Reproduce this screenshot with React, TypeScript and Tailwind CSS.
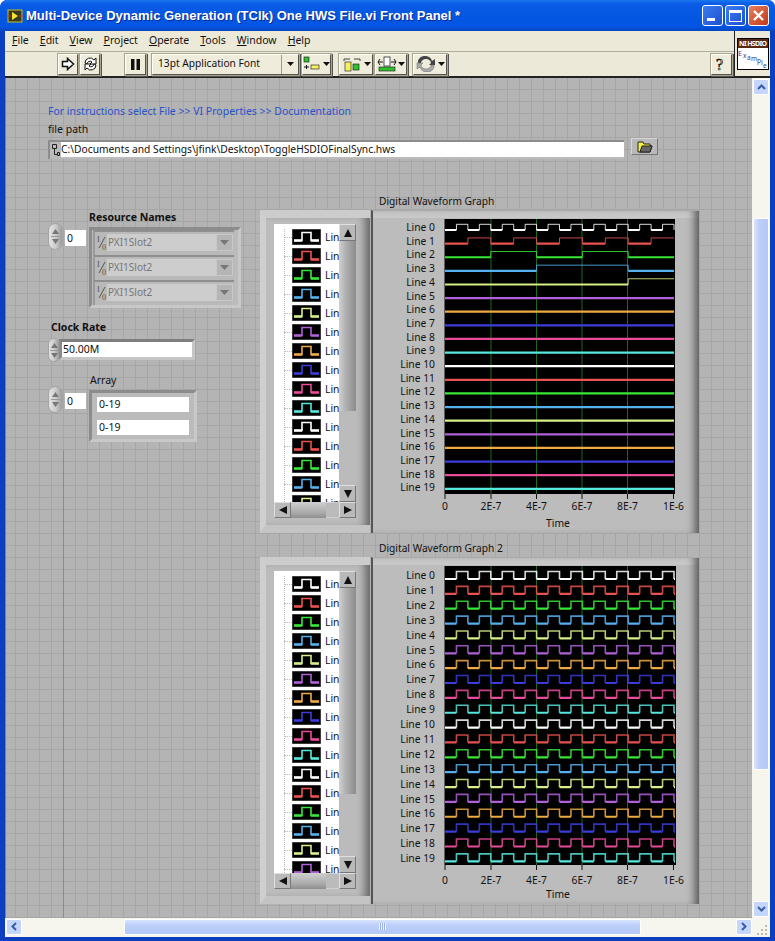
import React from "react";

const COLORS = ["#ffffff", "#e8534f", "#38e838", "#55b0ee", "#d8f088", "#b060d8", "#eeaa44", "#3c3cdc", "#e84c9a", "#55e8dc"];
const SANS = "[font-family:'Noto_Sans','Open_Sans',sans-serif]";

// one square wave, drawn as a thick low part and a thinner high part
function wave(x0: number, x1: number, seg: number, low: number, high: number) {
  let lowD = "";
  let highD = "";
  let x = x0;
  let up = false;
  while (x < x1 - 0.5) {
    const next = Math.min(x + seg, x1);
    if (up) highD += `M${x} ${low}V${high}H${next}${next < x1 ? `V${low}` : ""}`;
    else lowD += `M${x} ${low}H${next}`;
    x = next;
    up = !up;
  }
  return { lowD, highD };
}

function Plot({ top, height, plotH, w, lowStart, step, amp, segs, thin, labelStart, labelStep, tickY, tickLabelY, timeY }: any) {
  const ticks = [
    { x: 72, t: "0" },
    { x: 118, t: "2E-7" },
    { x: 163.5, t: "4E-7" },
    { x: 209, t: "6E-7" },
    { x: 254.5, t: "8E-7" },
    { x: 300.5, t: "1E-6" },
  ];
  return (
    <svg width={326} height={height} className={`block ${SANS}`}>
      <rect x={71.5} y={top} width={w - 71.5} height={plotH} fill="#000" />
      {[118, 163.5, 209, 254.5].map((x) => (
        <line key={x} x1={x} x2={x} y1={top} y2={top + plotH} stroke="#1f6a1f" strokeWidth={1} />
      ))}
      {Array.from({ length: 20 }).map((_, k) => {
        const low = lowStart + step * k;
        const seg = segs(k);
        const { lowD, highD } = wave(72, w - 1, seg, low, low - amp);
        const c = COLORS[k % 10];
        return (
          <g key={k} fill="none" stroke={c}>
            <path d={lowD} strokeWidth={2.2} />
            <path d={highD} strokeWidth={thin} strokeOpacity={0.85} />
          </g>
        );
      })}
      {Array.from({ length: 20 }).map((_, k) => (
        <text key={k} x={62} y={labelStart + labelStep * k} textAnchor="end" fontSize={10.3} fill="#111">
          Line {k}
        </text>
      ))}
      {ticks.map((t) => (
        <g key={t.t}>
          <line x1={t.x} x2={t.x} y1={tickY} y2={tickY + 5} stroke="#111" />
          <text x={t.x} y={tickLabelY} textAnchor="middle" fontSize={10.3} fill="#111">
            {t.t}
          </text>
        </g>
      ))}
      <text x={185} y={timeY} textAnchor="middle" fontSize={10.3} fill="#111">
        Time
      </text>
    </svg>
  );
}

function LegendIcon({ color }: { color: string }) {
  return (
    <svg width="29" height="16" className="block shrink-0">
      <rect width="29" height="16" fill="#000" stroke="#777" />
      <path d="M2 11.5H10V3.5H19V11.5H27" fill="none" stroke={color} strokeWidth="1.6" />
      <path d="M2 11.5H10M19 11.5H27" fill="none" stroke={color} strokeWidth="2.4" />
    </svg>
  );
}

function Arrow({ dir }: { dir: "up" | "down" | "left" | "right" }) {
  const d = {
    up: "M5 1L9 9H1Z",
    down: "M5 9L9 1H1Z",
    left: "M1 5L9 1V9Z",
    right: "M9 5L1 1V9Z",
  }[dir];
  return (
    <svg width="10" height="10">
      <path d={d} fill="#111" />
    </svg>
  );
}

function SquareBtn({ dir, className }: { dir: "up" | "down" | "left" | "right"; className: string }) {
  return (
    <div className={`flex items-center justify-center shrink-0 bg-[#b9b9b9] border border-t-[#e0e0e0] border-l-[#e0e0e0] border-r-[#777] border-b-[#777] ${className}`}>
      <Arrow dir={dir} />
    </div>
  );
}

function Legend({ rows, listH, thumbH }: { rows: number; listH: number; thumbH: number }) {
  return (
    <div className="w-[110px] bg-[#bcbcbc] border-t-[8px] border-t-[#cccccc] border-l-[6px] border-l-[#cfcfcf] border-b-[8px] border-b-[#c4c4c4] pt-[6px] pl-[8px] pb-[7px] shadow-[inset_-10px_0_8px_-5px_#666] flex flex-col">
      <div className="flex w-[82px]">
        <div className={`w-[65px] bg-white overflow-hidden relative ${listH === 278 ? "h-[278px]" : "h-[302px]"}`}>
          <div className="absolute left-[10px] top-[5px] bottom-0 border-l border-dotted border-[#bbbbbb]" />
          <div className="flex flex-col gap-[3px] pt-[5px] pl-[18px]">
            {Array.from({ length: rows }).map((_, i) => (
              <div key={i} className="flex items-center gap-[4px] relative h-[16px]">
                <div className="absolute left-[-8px] top-[8px] w-[8px] border-t border-dotted border-[#bbbbbb]" />
                <LegendIcon color={COLORS[i % 10]} />
                <span className="text-[10.3px] text-[#111] leading-none">Line</span>
              </div>
            ))}
          </div>
        </div>
        <div className="w-[17px] flex flex-col bg-[#c0c0c0]">
          <SquareBtn dir="up" className="h-[17px]" />
          <div className={`w-[17px] bg-[linear-gradient(to_right,#d0d0d0,#b0b0b0_40%,#8c8c8c)] ${thumbH === 170 ? "h-[170px]" : "h-[206px]"}`} />
          <div className="flex-1 bg-[#bbbbbb]" />
          <SquareBtn dir="down" className="h-[17px]" />
        </div>
      </div>
      <div className="flex h-[16px] w-[82px]">
        <SquareBtn dir="left" className="w-[17px]" />
        <div className="w-[35px] bg-[linear-gradient(to_bottom,#d0d0d0,#a8a8a8_70%,#8e8e8e)]" />
        <div className="w-[13px] bg-[#bbbbbb] border-y border-[#d0d0d0]" />
        <SquareBtn dir="right" className="w-[17px]" />
      </div>
    </div>
  );
}

function GraphPanel({ children, h }: { children: React.ReactNode; h: number }) {
  return (
    <div className={`w-[328px] bg-[#bcbcbc] border-t-[1px] border-t-[#aaaaaa] ml-px border-l-[2px] border-l-[#555] shadow-[inset_-9px_0_8px_-5px_#555,inset_0_8px_0_-1px_#c8c8c8] ${h === 323 ? "h-[323px]" : "h-[347px]"}`}>
      {children}
    </div>
  );
}

function Stepper({ className }: { className: string }) {
  return (
    <div className={`flex flex-col items-center justify-center gap-[2px] rounded-full bg-[linear-gradient(to_right,#e4e4e4,#cccccc_50%,#9c9c9c)] border border-[#a4a4a4] ${className}`}>
      <svg width="7" height="5"><path d="M3.5 0L7 5H0Z" fill="#777" /></svg>
      <div className="w-[9px] border-t border-[#999]" />
      <svg width="7" height="5"><path d="M3.5 5L7 0H0Z" fill="#777" /></svg>
    </div>
  );
}

function Sunken({ className, children }: { className: string; children: React.ReactNode }) {
  return (
    <div className={`border-[3px] border-t-[#7e7e7e] border-l-[#8a8a8a] border-r-[#c6c6c6] border-b-[#c6c6c6] ${className}`}>
      {children}
    </div>
  );
}

function ResourceRow() {
  return (
    <div className="flex w-[141px] h-[25px] bg-[#b9b9b9] items-start pt-[2px] pl-[2px] border-t-[2px] border-t-[#8f8f8f] border-l-[2px] border-l-[#9a9a9a]">
      <svg width="10" height="17" className="shrink-0">
        <text x="0" y="8" fontSize="8" fill="#555" className="[font-family:'Liberation_Serif',serif]">I</text>
        <path d="M8 3L2 14" stroke="#555" fill="none" />
        <text x="5" y="16" fontSize="8" fill="#555" className="[font-family:'Liberation_Serif',serif]">0</text>
      </svg>
      <div className="w-[109px] h-[17px] bg-[#cdcdcd] text-[#777] text-[10px] leading-[17px] pl-[1px]">PXI1Slot2</div>
      <div className="w-[17px] h-[17px] flex items-center justify-center bg-[#b5b5b5] border border-[#c8c8c8]">
        <svg width="9" height="5"><path d="M0 0H9L4.5 5Z" fill="#777" /></svg>
      </div>
    </div>
  );
}

function ToolBtn({ className, children }: { className: string; children: React.ReactNode }) {
  return (
    <div className={`h-[21px] flex items-center justify-center bg-[#efecdc] border border-t-[#fffff8] border-l-[#fffff8] border-r-[#55544c] border-b-[#55544c] shadow-[0_0_0_1px_#a8a690,1px_1px_0_1px_#55544c] shrink-0 ${className}`}>
      {children}
    </div>
  );
}

function Caret() {
  return (
    <svg width="7" height="4" className="shrink-0"><path d="M0 0H7L3.5 4Z" fill="#111" /></svg>
  );
}

function Menu({ label }: { label: string }) {
  return (
    <span>
      <u>{label[0]}</u>
      {label.slice(1)}
    </span>
  );
}

export default function App() {
  return (
    <div className={`w-[775px] h-[941px] overflow-hidden flex flex-col bg-[#0c3fc0] rounded-t-[7px] text-[#111] ${SANS}`}>
      {/* title bar */}
      <div className="h-[31px] shrink-0 rounded-t-[7px] bg-[linear-gradient(to_bottom,#1a78ee,#0a5ce6_12%,#0457e0_50%,#0355e4_85%,#0447c0)] flex items-center pl-[7px] pr-[6px]">
        <svg width="16" height="14" className="shrink-0">
          <rect x="1" y="1" width="14" height="12" fill="#3a3a20" stroke="#c8c020" />
          <path d="M5 3L11 7L5 11Z" fill="#f4e830" />
          <path d="M0 7H4M12 7H16" stroke="#e03020" />
        </svg>
        <span className="ml-[3px] text-[13px] font-bold text-white whitespace-nowrap [font-family:'Liberation_Sans',sans-serif] [text-shadow:1px_1px_0_#0a2a90]">
          Multi-Device Dynamic Generation (TClk) One HWS File.vi Front Panel *
        </span>
        <div className="ml-auto flex gap-[2px]">
          <div className="w-[21px] h-[21px] rounded-[3px] border border-white bg-[linear-gradient(135deg,#3c7cf0,#1c50d0)] relative flex items-end pl-[4px] pb-[4px]">
            <div className="w-[8px] h-[3px] bg-white" />
          </div>
          <div className="w-[21px] h-[21px] rounded-[3px] border border-white bg-[linear-gradient(135deg,#3c7cf0,#1c50d0)] flex items-center justify-center">
            <div className="w-[13px] h-[12px] border border-t-[3px] border-white" />
          </div>
          <div className="w-[21px] h-[21px] rounded-[3px] border border-white bg-[linear-gradient(135deg,#e88060,#c03818)] flex items-center justify-center">
            <svg width="13" height="13"><path d="M2 2L11 11M11 2L2 11" stroke="#fff" strokeWidth="2.4" /></svg>
          </div>
        </div>
      </div>

      <div className="flex-1 min-h-0 flex flex-col ml-[5px] mr-[5px] mb-[4px] bg-[#ece9d8]">
        {/* menu + toolbar */}
        <div className="h-[47px] shrink-0 flex border-b-[2px] border-b-[#222]">
          <div className="flex-1 flex flex-col">
            <div className="h-[21px] flex items-center gap-[11px] pl-[7px] text-[10.5px] border-b border-b-[#b0ae9c]">
              <Menu label="File" />
              <Menu label="Edit" />
              <Menu label="View" />
              <Menu label="Project" />
              <Menu label="Operate" />
              <Menu label="Tools" />
              <Menu label="Window" />
              <Menu label="Help" />
            </div>
            <div className="flex-1 flex items-center pl-[53px] pr-[2px]">
              <ToolBtn className="w-[20px]">
                <svg width="14" height="14"><path d="M1.5 4.5H6.5V1.5L12.5 7L6.5 12.5V9.5H1.5Z" fill="#fff" stroke="#111" strokeWidth="1.5" /></svg>
              </ToolBtn>
              <ToolBtn className="w-[20px] ml-[2px]">
                <svg width="17" height="16">
                  <path d="M3 7A5 5 0 0 1 12 4L14 2V8H8L10 6A3 3 0 0 0 5 8Z" fill="#fff" stroke="#111" />
                  <path d="M14 9A5 5 0 0 1 5 12L3 14V8H9L7 10A3 3 0 0 0 12 8Z" fill="#fff" stroke="#111" />
                </svg>
              </ToolBtn>
              <ToolBtn className="w-[21px] ml-[25px]">
                <svg width="11" height="11"><path d="M1 0H4.5V11H1ZM6.5 0H10V11H6.5Z" fill="#111" /></svg>
              </ToolBtn>
              <ToolBtn className="w-[147px] ml-[6px] justify-start text-[10.2px] pl-[5px]">
                <span className="whitespace-nowrap flex-1">13pt Application Font</span>
                <div className="w-[17px] h-full border-l border-[#999] flex items-center justify-center"><Caret /></div>
              </ToolBtn>
              <ToolBtn className="w-[29px] ml-[3px] gap-[2px]">
                <svg width="18" height="16">
                  <rect x="1" y="1" width="5" height="5" fill="#30c030" stroke="#111" strokeWidth=".6" />
                  <rect x="8" y="9" width="8" height="4" fill="#f4f060" stroke="#111" strokeWidth=".6" />
                  <path d="M1 11H6M3.5 9V13" stroke="#111" />
                </svg>
                <Caret />
              </ToolBtn>
              <ToolBtn className="w-[34px] ml-[8px] gap-[2px]">
                <svg width="20" height="16">
                  <path d="M2 5V3H8M12 3H18V5" stroke="#444" fill="none" />
                  <rect x="3" y="6" width="6" height="9" fill="#f4f060" stroke="#111" strokeWidth=".6" />
                  <rect x="11" y="8" width="6" height="6" fill="#30c030" stroke="#111" strokeWidth=".6" />
                </svg>
                <Caret />
              </ToolBtn>
              <ToolBtn className="w-[32px] ml-[2px] gap-[1px]">
                <svg width="20" height="16">
                  <path d="M1 6H6M14 6H19M3 3L1 6L3 9M17 3L19 6L17 9" stroke="#111" fill="none" />
                  <rect x="7" y="1" width="6" height="9" fill="#fff" stroke="#111" strokeWidth=".7" />
                  <rect x="2" y="11" width="16" height="4" fill="#30c030" stroke="#111" strokeWidth=".6" />
                </svg>
                <Caret />
              </ToolBtn>
              <ToolBtn className="w-[34px] ml-[6px] gap-[2px]">
                <svg width="20" height="16">
                  <path d="M2 7A7 6 0 0 1 16 5L19 3V9H13L15 7A5 4 0 0 0 5 7Z" fill="#444" />
                  <path d="M18 9A7 6 0 0 1 4 11L1 13V7H7L5 9A5 4 0 0 0 15 9Z" fill="#aaa" stroke="#666" strokeWidth=".5" />
                </svg>
                <Caret />
              </ToolBtn>
              <ToolBtn className="w-[21px] ml-auto">
                <svg width="11" height="17"><text x="0" y="14" fontSize="16" fill="#f0f0b0" stroke="#111" strokeWidth=".7" className="[font-family:'Liberation_Serif',serif]">?</text></svg>
              </ToolBtn>
            </div>
          </div>
          <div className="w-[36px] shrink-0 border-l border-l-[#222] flex items-center justify-center">
            <svg width="32" height="32" className={`block ${SANS}`}>
              <rect x=".5" y=".5" width="31" height="31" fill="#fff" stroke="#000" />
              <rect x="1" y="1" width="30" height="9" fill="#5a2810" />
              <text x="2" y="8" fontSize="7" fontWeight="bold" fill="#fff" textLength="28">NI HSDIO</text>
              <g fill="#2a3a9c">
                <text x="1" y="18" fontSize="7">E</text>
                <text x="6" y="20" fontSize="6.5">x</text>
                <text x="10" y="21.5" fontSize="6.5">a</text>
                <text x="14" y="23" fontSize="6.5">m</text>
                <text x="20" y="25" fontSize="6.5">p</text>
                <text x="24" y="27" fontSize="7">l</text>
                <text x="26" y="29.5" fontSize="6.5">e</text>
              </g>
            </svg>
          </div>
        </div>

        <div className="flex-1 min-h-0 flex">
          {/* front panel */}
          <div className="relative flex-1 min-w-0 bg-[#b4b4b4] bg-[linear-gradient(to_right,#a6a6a6_1px,transparent_1px),linear-gradient(to_bottom,#a6a6a6_1px,transparent_1px)] bg-[size:12px_12px] bg-[position:10px_11px] shadow-[inset_1px_0_0_#808080]">
            <div className="absolute left-[58px] top-[372px] bottom-0 w-px bg-[#8c8c8c]" />
            <div className="absolute left-[43px] top-[26px] text-[10.5px] leading-[14px] text-[#2a52c8] whitespace-nowrap">
              For instructions select File &gt;&gt; VI Properties &gt;&gt; Documentation
            </div>
            <div className="absolute left-[43px] top-[44px] text-[10.5px] leading-[14px] whitespace-nowrap">file path</div>

            <div className="absolute left-[43px] top-[62px] flex">
              <div className="w-[576px] h-[19px] flex bg-[#bbbbbb] border-t-[2px] border-t-[#8c8c8c] border-l-[2px] border-l-[#8c8c8c]">
                <div className="w-[11px]">
                  <svg width="9" height="14" className="mt-[1px] ml-[1px]">
                    <path d="M1.5 1.5H5.5V5.5H1.5ZM3.5 5.5V11.5H6.5M6.5 9.5H8.5V12.5H6.5Z" fill="none" stroke="#222" />
                  </svg>
                </div>
                <div className="flex-1 bg-white h-[15px] text-[10.25px] leading-[15px] whitespace-nowrap">
                  C:\Documents and Settings\jfink\Desktop\ToggleHSDIOFinalSync.hws
                </div>
              </div>
              <div className="w-[27px] h-[17px] ml-[7px] -mt-[2px] bg-[#b9b9b9] border border-t-[#d8d8d8] border-l-[#d8d8d8] border-r-[#777] border-b-[#777] flex items-center justify-center">
                <svg width="16" height="12">
                  <path d="M1 11V1H6L7 3H13V5H15L13 11Z" fill="#f4f040" stroke="#222" />
                  <path d="M3 11L5 5H15L13 11Z" fill="#666" stroke="#222" />
                </svg>
              </div>
            </div>

            {/* Resource Names */}
            <div className="absolute left-[84px] top-[132px] text-[10.5px] leading-[14px] font-bold">Resource Names</div>
            <Stepper className="absolute left-[43px] top-[145px] w-[15px] h-[27px]" />
            <div className="absolute left-[60px] top-[152px] w-[21px] h-[16px] bg-white text-[10.5px] leading-[16px] pl-[2px]">0</div>
            <div className="absolute left-[84px] top-[149px] w-[152px] h-[81px] flex flex-col bg-[#bbbbbb] border-[3px] border-t-[#8c8c8c] border-l-[#8c8c8c] border-r-[#c8c8c8] border-b-[#c8c8c8] pl-[1px]">
              <ResourceRow />
              <ResourceRow />
              <ResourceRow />
            </div>

            {/* Clock Rate */}
            <div className="absolute left-[46px] top-[242px] text-[10.5px] leading-[14px] font-bold">Clock Rate</div>
            <Stepper className="absolute left-[43px] top-[260px] w-[12px] h-[24px]" />
            <Sunken className="absolute left-[54px] top-[261px] w-[136px] h-[21px]">
              <div className="bg-white h-[15px] text-[10.5px] leading-[15px] pl-[1px]">50.00M</div>
            </Sunken>

            {/* Array */}
            <div className="absolute left-[85px] top-[295px] text-[10.5px] leading-[14px]">Array</div>
            <Stepper className="absolute left-[43px] top-[308px] w-[15px] h-[27px]" />
            <div className="absolute left-[60px] top-[315px] w-[21px] h-[16px] bg-white text-[10.5px] leading-[16px] pl-[2px]">0</div>
            <div className="absolute left-[84px] top-[312px] w-[108px] h-[52px] bg-[#bbbbbb] border-[3px] border-t-[#8c8c8c] border-l-[#8c8c8c] border-r-[#c8c8c8] border-b-[#c8c8c8] pl-[5px] pt-[4px] flex flex-col gap-[8px]">
              <div className="w-[92px] h-[15px] bg-white text-[10.5px] leading-[15px] pl-[2px]">0-19</div>
              <div className="w-[92px] h-[15px] bg-white text-[10.5px] leading-[15px] pl-[2px]">0-19</div>
            </div>

            {/* Graph 1 */}
            <div className="absolute left-[255px] top-[116px]">
              <div className="ml-[119px] text-[10.2px] leading-[14px] h-[16px] whitespace-nowrap">Digital Waveform Graph</div>
              <div className="flex">
                <Legend rows={15} listH={278} thumbH={170} />
                <GraphPanel h={323}>
                  <Plot
                    w={302}
                    height={321}
                    top={8}
                    plotH={275}
                    lowStart={19}
                    step={13.62}
                    amp={5.7}
                    thin={1}
                    segs={(k: number) => (k < 5 ? 11.45 * 2 ** k : 400)}
                    labelStart={20}
                    labelStep={13.7}
                    tickY={283}
                    tickLabelY={299}
                    timeY={316}
                  />
                </GraphPanel>
              </div>
            </div>

            {/* Graph 2 */}
            <div className="absolute left-[255px] top-[463px]">
              <div className="ml-[119px] text-[10.2px] leading-[14px] h-[16px] whitespace-nowrap">Digital Waveform Graph 2</div>
              <div className="flex">
                <Legend rows={16} listH={302} thumbH={206} />
                <GraphPanel h={347}>
                  <Plot
                    w={303}
                    height={345}
                    top={8}
                    plotH={299}
                    lowStart={21}
                    step={14.86}
                    amp={7.5}
                    thin={1.6}
                    segs={() => 11.45}
                    labelStart={21}
                    labelStep={14.9}
                    tickY={307}
                    tickLabelY={326}
                    timeY={340}
                  />
                </GraphPanel>
              </div>
            </div>
          </div>

          {/* vertical scrollbar */}
          <div className="w-[18px] shrink-0 flex flex-col bg-[#f6f5ee] pl-[1px] pb-[1px] pt-[1px]">
            <div className="h-[16px] w-[16px] rounded-[2px] bg-[#c4d6fb] border border-white flex items-center justify-center">
              <svg width="9" height="6"><path d="M1 5L4.5 1.5L8 5" stroke="#3a5ca8" strokeWidth="2" fill="none" /></svg>
            </div>
            <div className="h-[123px]" />
            <div className="h-[552px] w-[16px] rounded-[2px] bg-[linear-gradient(to_right,#d8e4fd,#bccefa_40%,#b4c8f6)] border border-white" />
            <div className="flex-1" />
            <div className="h-[16px] w-[16px] rounded-[2px] bg-[#c4d6fb] border border-white flex items-center justify-center">
              <svg width="9" height="6"><path d="M1 1L4.5 4.5L8 1" stroke="#3a5ca8" strokeWidth="2" fill="none" /></svg>
            </div>
          </div>
        </div>

        {/* horizontal scrollbar */}
        <div className="h-[19px] shrink-0 flex items-center bg-[#f6f5ee] pl-[1px] pb-[2px]">
          <div className="h-[16px] w-[16px] rounded-[2px] bg-[#c4d6fb] border border-white flex items-center justify-center">
            <svg width="6" height="9"><path d="M5 1L1.5 4.5L5 8" stroke="#3a5ca8" strokeWidth="2" fill="none" /></svg>
          </div>
          <div className="w-[102px]" />
          <div className="w-[517px] h-[16px] rounded-[2px] bg-[linear-gradient(to_bottom,#d8e4fd,#bccefa_40%,#b4c8f6)] border border-white flex items-center justify-center">
            <div className="w-[7px] h-[7px] bg-[repeating-linear-gradient(to_right,#eef3ff_0,#eef3ff_1px,#9bb2e8_1px,#9bb2e8_2px)]" />
          </div>
          <div className="w-[95px]" />
          <div className="h-[16px] w-[16px] rounded-[2px] bg-[#c4d6fb] border border-white flex items-center justify-center">
            <svg width="6" height="9"><path d="M1 1L4.5 4.5L1 8" stroke="#3a5ca8" strokeWidth="2" fill="none" /></svg>
          </div>
          <div className="flex-1 h-full flex items-end justify-end pr-[2px]">
            <svg width="12" height="12">
              <path d="M9 2h2v2h-2zM5 6h2v2h-2zM9 6h2v2h-2zM1 10h2v2h-2zM5 10h2v2h-2zM9 10h2v2h-2z" fill="#bdbaa8" />
            </svg>
          </div>
        </div>
      </div>
    </div>
  );
}
